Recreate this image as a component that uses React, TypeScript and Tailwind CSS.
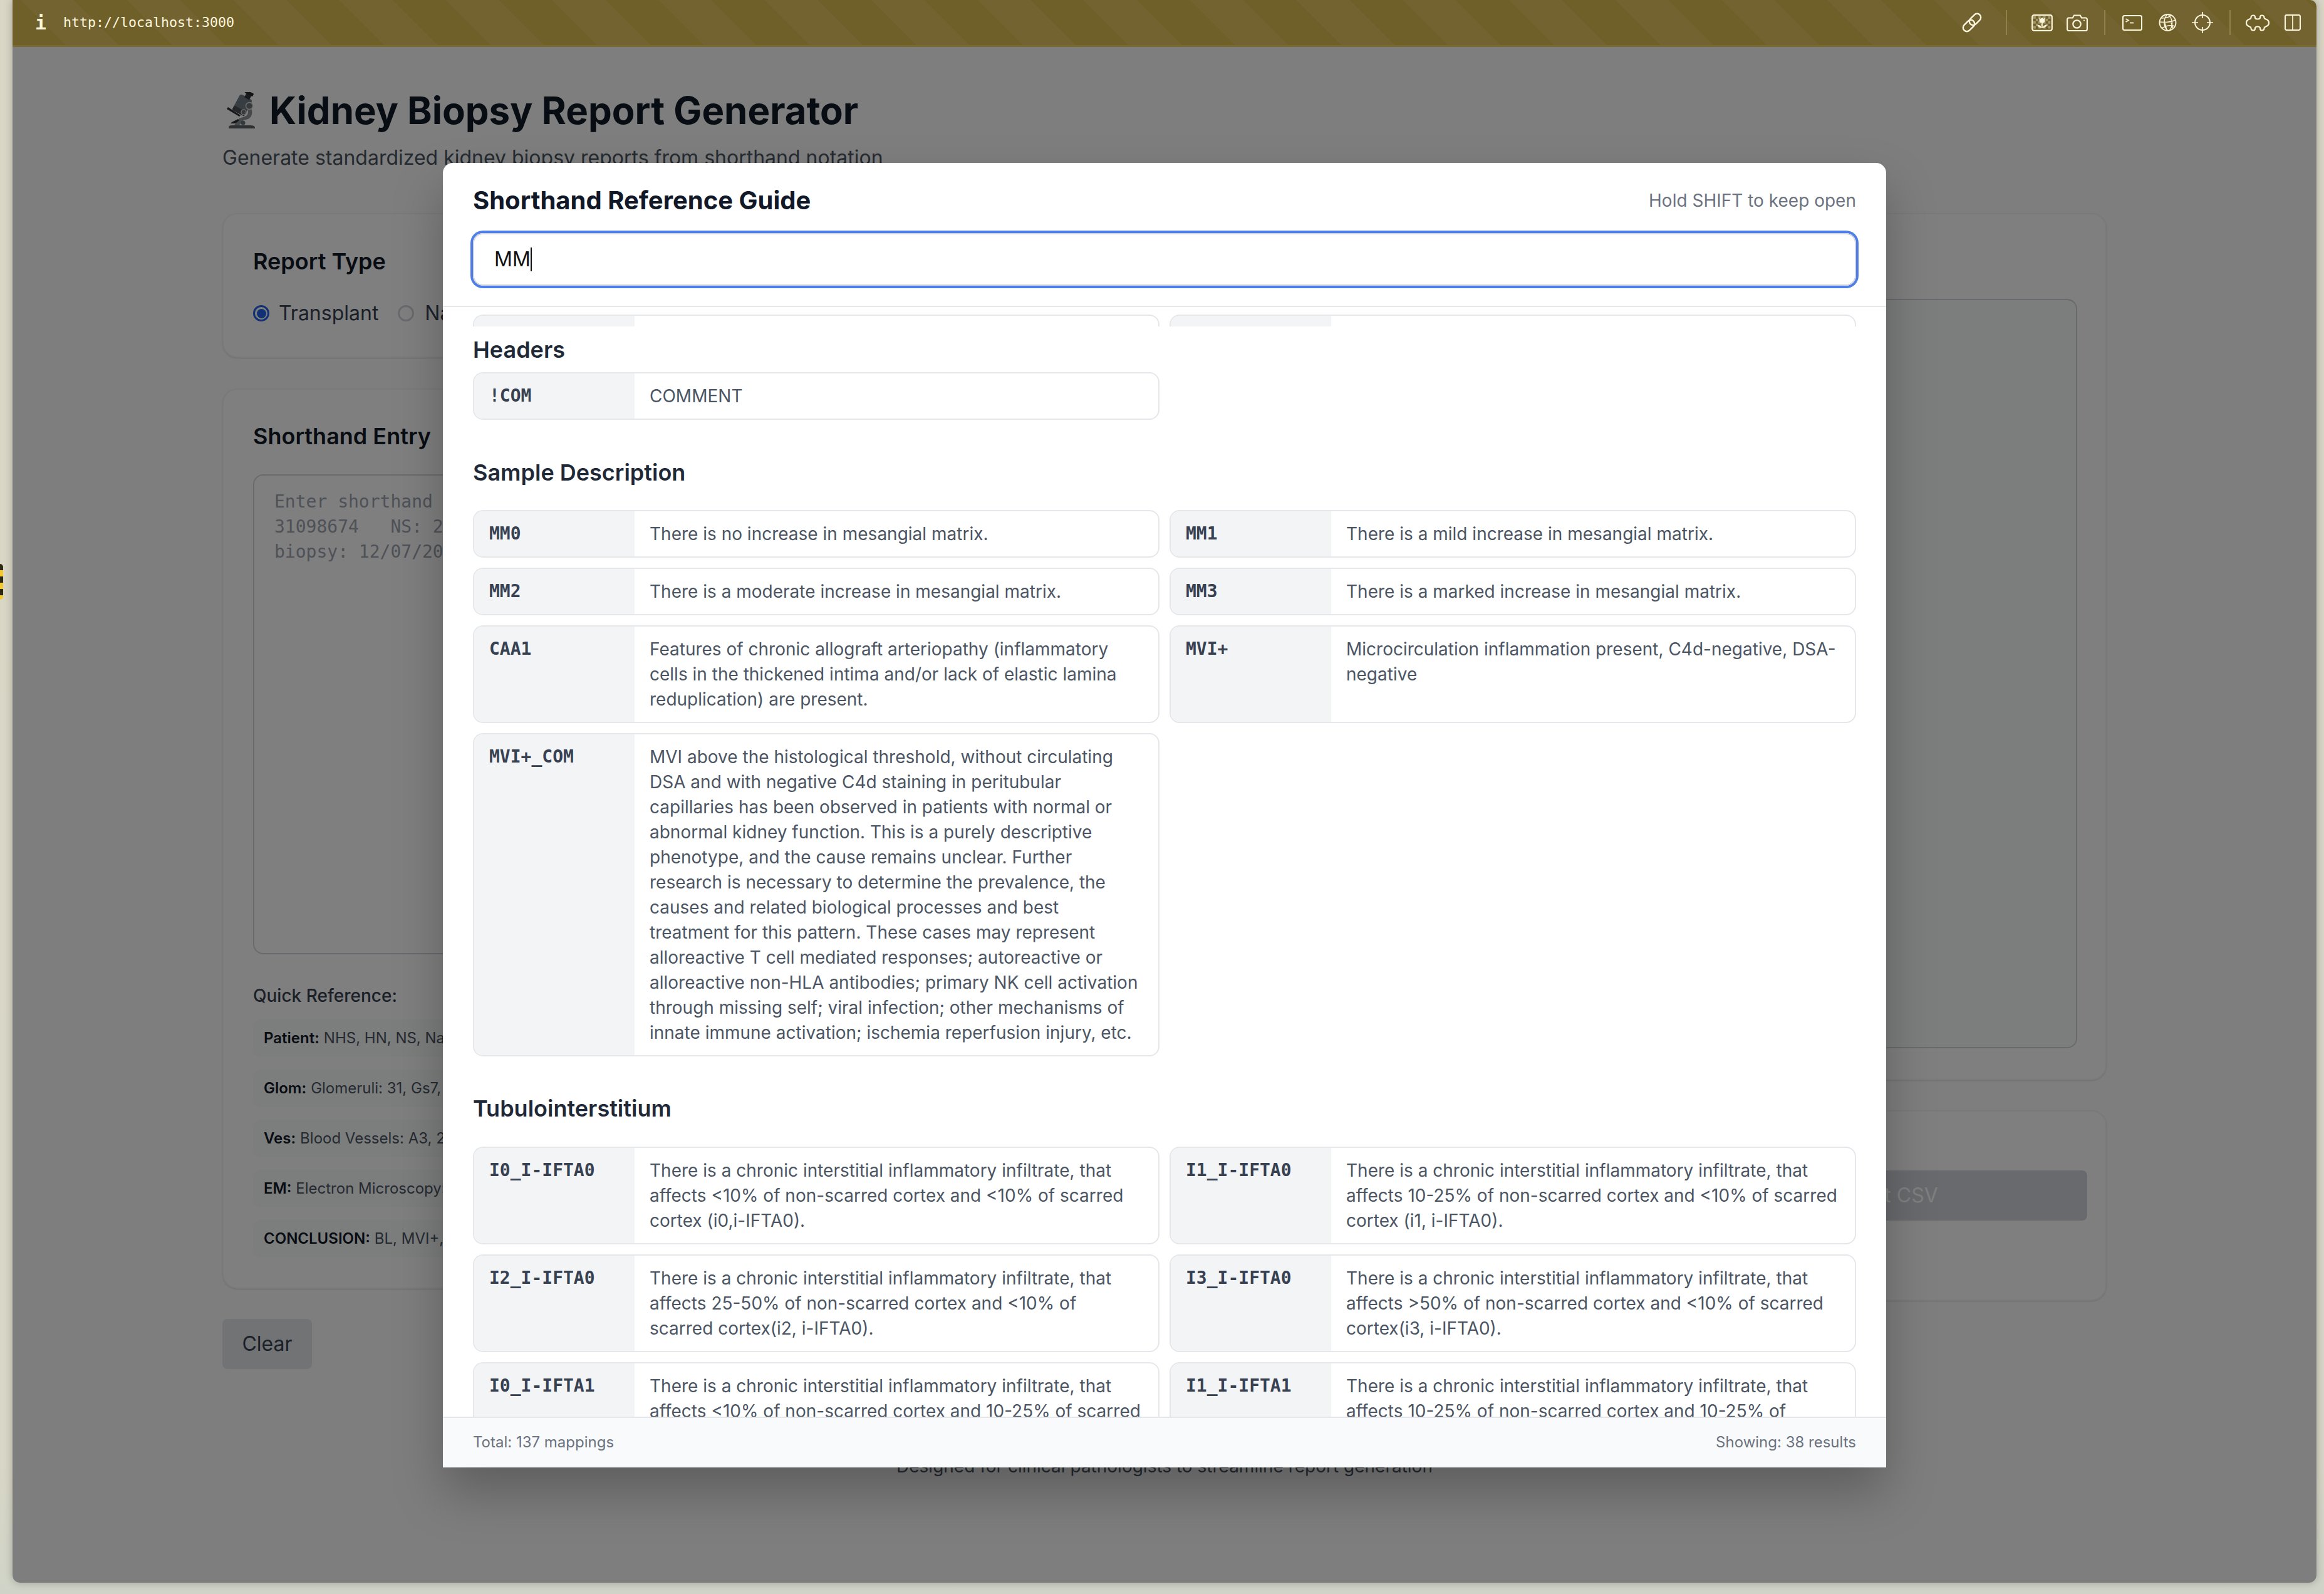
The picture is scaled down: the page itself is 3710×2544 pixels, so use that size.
import React from "react";

const C = "#fdf6dc";

function LinkIcon() {
  return (
    <svg width="34" height="34" viewBox="0 0 34 34" fill="none" stroke={C} strokeWidth="2.4">
      <rect x="1.5" y="16" width="21" height="12" rx="6" transform="rotate(-45 12 22)" />
      <rect x="11.5" y="6" width="21" height="12" rx="6" transform="rotate(-45 22 12)" />
    </svg>
  );
}
function FlowerIcon() {
  const cells: React.ReactNode[] = [];
  for (let r = 0; r < 5; r++)
    for (let c = 0; c < 7; c++)
      if ((r + c) % 2 === 0)
        cells.push(<rect key={r + "-" + c} x={3 + c * 3.9} y={3 + r * 3.9} width="3.9" height="3.9" fill={C} opacity="0.38" />);
  return (
    <svg width="34" height="27" viewBox="0 0 34 27" fill="none">
      {cells}
      <rect x="1.2" y="1.2" width="31.6" height="24.6" rx="3" stroke={C} strokeWidth="2.2" />
      <path d="M12.5 5.5l2.2 1.6L17 4.8l2.3 2.3 2.2-1.6v4.2c0 2.5-2 4-4.5 4s-4.5-1.5-4.5-4z" fill={C} />
      <path d="M17 13v9" stroke={C} strokeWidth="1.6" />
      <path d="M16.4 21.5c-3.6 0-6-1.8-7-4.6 3.4-.3 6 1.4 7 4.6zM17.6 21.5c3.6 0 6-1.8 7-4.6-3.4-.3-6 1.4-7 4.6z" fill={C} />
    </svg>
  );
}
function CameraIcon() {
  return (
    <svg width="34" height="27" viewBox="0 0 34 27" fill="none" stroke={C} strokeWidth="2.2">
      <path d="M3.5 5.5h6.3l2.2-4h9.8l2.2 4h6.5a2.4 2.4 0 0 1 2.4 2.4v15.7a2.4 2.4 0 0 1-2.4 2.4H3.5a2.4 2.4 0 0 1-2.4-2.4V7.9a2.4 2.4 0 0 1 2.4-2.4z" />
      <circle cx="16.5" cy="15.5" r="6.2" />
      <circle cx="28" cy="9.5" r="1.1" fill={C} stroke="none" />
    </svg>
  );
}
function TerminalIcon() {
  return (
    <svg width="32" height="25" viewBox="0 0 32 25" fill="none" stroke={C} strokeWidth="2">
      <rect x="1" y="1" width="30" height="23" rx="2.5" />
      <path d="M5.5 6l4.5 2.5-4.5 2.5" strokeWidth="1.6" />
      <path d="M12 12.5h6" strokeWidth="1.8" />
    </svg>
  );
}
function GlobeIcon() {
  return (
    <svg width="29" height="28" viewBox="0 0 29 28" fill="none" stroke={C} strokeWidth="1.5">
      <circle cx="14.5" cy="14" r="13" strokeWidth="1.9" />
      <path d="M14 1c-3 3-5 8-5 13s2 10 6 13M15 1c4 3 6 8 6.5 13 .3 4-1 9-4.5 13M20 2.8C16 6 9 7 3.5 7M27 10C20 13 10 14 1.5 13M26 20c-6-2-14-1-21 3M10 15l3 11M20 14l3 10" />
    </svg>
  );
}
function CrosshairIcon() {
  return (
    <svg width="34" height="34" viewBox="0 0 34 34" fill="none" stroke={C} strokeWidth="2">
      <circle cx="17" cy="17" r="12" />
      <path d="M17 0v10M17 24v10M0 17h10M24 17h10" strokeWidth="1.7" />
    </svg>
  );
}
function PuzzleIcon() {
  return (
    <svg width="38" height="27" viewBox="0 0 38 27" fill="none" stroke={C} strokeWidth="2.2" strokeLinejoin="round">
      <path d="M8.5 5C8.5 2.5 10.5 1.5 12.5 1.5C14.5 1.5 15 3 15 5C15 6.5 16 7.5 19 7.5C22 7.5 23 6.5 23 5C23 3 23.5 1.5 25.5 1.5C27.5 1.5 29.5 2.5 29.5 5C29.5 6.5 30.5 7 32 7.5C35 8.5 37 11 37 13.5C37 16 35 18.5 32 19.5C30.5 20 29.5 20.5 29.5 22C29.5 24.5 27.5 25.5 25.5 25.5C23.5 25.5 23 24 23 22C23 20.5 22 19.5 19 19.5C16 19.5 15 20.5 15 22C15 24 14.5 25.5 12.5 25.5C10.5 25.5 8.5 24.5 8.5 22C8.5 20.5 7.5 20 6 19.5C3 18.5 1 16 1 13.5C1 11 3 8.5 6 7.5C7.5 7 8.5 6.5 8.5 5Z" />
    </svg>
  );
}
function SplitIcon() {
  return (
    <svg width="26" height="26" viewBox="0 0 26 26" fill="none" stroke={C} strokeWidth="2.1">
      <rect x="1" y="1" width="24" height="24" rx="2.5" />
      <path d="M13 1v24" strokeWidth="1.7" />
    </svg>
  );
}
function Microscope() {
  return (
    <svg width="48" height="58" viewBox="0 0 48 58" className="shrink-0">
      <path d="M3 56c0-2 2-3 5-3h30c4 0 6 1 7 3v2H3z" fill="#5d6468" />
      <path d="M20 53l6-8 8-2c6-3 8-10 5-17-1-3-3-5-5-6l-3 5c4 3 4 10 0 13l-11 4-8 11z" fill="#8b9298" />
      <path d="M2 24l20 13-2 2L0 27z" fill="#2d3136" />
      <path d="M8 48l10-5 2 2-6 5H6z" fill="#2b2f33" />
      <g transform="rotate(28 24 22)">
        <rect x="13" y="6" width="22" height="28" rx="4" fill="#6f7a82" />
        <rect x="13" y="27" width="22" height="8" rx="2" fill="#4d4f50" />
        <rect x="21" y="-1" width="9" height="9" fill="#31353a" />
        <rect x="18" y="-4" width="14" height="5" rx="1" fill="#24272b" />
      </g>
      <circle cx="36" cy="22" r="5.5" fill="#6f7478" stroke="#d9dadb" strokeWidth="1.5" />
      <circle cx="27" cy="32" r="4" fill="#6f7478" stroke="#d9dadb" strokeWidth="1.5" />
      <circle cx="26" cy="49" r="3.5" fill="#6d7276" />
    </svg>
  );
}

function Sep({ cls }: { cls: string }) {
  return <div className={"w-[2px] h-[40px] bg-[#8f8147] " + cls} />;
}
function Tool({ children }: { children: React.ReactNode }) {
  return <div className="w-[56px] flex items-center justify-center">{children}</div>;
}

function Row({ k, v }: { k: string; v: string }) {
  return (
    <div className="flex border-2 border-[#e5e7eb] rounded-[16px] overflow-hidden bg-white">
      <div className="w-[256px] shrink-0 bg-[#f3f4f6] px-[24px] py-[16px] font-['DejaVu_Sans_Mono',monospace] font-bold text-[28px] leading-[40px] text-[#374151]">
        {k}
      </div>
      <div className="flex-1 px-[24px] py-[16px] text-[28px] leading-[40px] text-[#4b5563]">{v}</div>
    </div>
  );
}

function QuickRow({ k, v }: { k: string; v: string }) {
  return (
    <div className="h-[60px] flex items-center px-[17px] rounded-[12px] bg-[#f9fafb] text-[24px] whitespace-nowrap overflow-hidden">
      <span className="font-semibold text-[#111827]">{k}</span>
      <span className="ml-[7px] text-[#4b5563]">{v}</span>
    </div>
  );
}

const Card = ({ className, children }: { className?: string; children: React.ReactNode }) => (
  <div className={"bg-white border-2 border-[#f3f4f6] rounded-[24px] shadow-sm px-[47px] " + (className ?? "")}>{children}</div>
);

export default function App() {
  return (
    <div className="relative w-[3710px] h-[2544px] overflow-hidden bg-[linear-gradient(180deg,#d9d6c6_0%,#d8d6c6_92%,#d0d4c8_100%)] pl-[20px] pr-[12px] pb-[18px] font-['Inter',sans-serif]">
      <div className="absolute left-0 top-[900px] w-[5px] h-[57px] rounded-r-full bg-[repeating-linear-gradient(180deg,#2e2a12_0,#2e2a12_10px,#f5c932_10px,#f5c932_20px)]" />
      <div className="h-full flex flex-col rounded-b-[12px] rounded-tr-[10px] overflow-hidden shadow-[0_0_14px_rgba(0,0,0,0.25)]">
        <div className="h-[75px] shrink-0 flex items-center border-b-[3px] border-[#7a6b34] bg-[repeating-linear-gradient(45deg,#6f5f29_0,#6f5f29_60px,#726330_60px,#726330_120px)]">
          <span className="ml-[36px] font-['DejaVu_Sans_Mono',monospace] font-bold text-[30px] text-[#fdf6dc]">i</span>
          <span className="ml-[27px] font-['DejaVu_Sans_Mono',monospace] text-[21.6px] text-[#fdf6dc]">http://localhost:3000</span>
          <div className="ml-auto pr-[10px] flex items-center">
            <Tool><LinkIcon /></Tool>
            <Sep cls="ml-[26px] mr-[28px]" />
            <Tool><FlowerIcon /></Tool>
            <Tool><CameraIcon /></Tool>
            <Sep cls="mx-[15px]" />
            <Tool><TerminalIcon /></Tool>
            <Tool><GlobeIcon /></Tool>
            <Tool><CrosshairIcon /></Tool>
            <Sep cls="mx-[15px]" />
            <Tool><PuzzleIcon /></Tool>
            <Tool><SplitIcon /></Tool>
          </div>
        </div>

        <div className="relative flex-1 bg-[#fbfdfb] overflow-hidden">
          <div className="w-[3008px] mx-auto pt-[65px]">
            <div className="flex items-center gap-[20px] h-[72px] pl-[7px]">
              <Microscope />
              <h1 className="text-[60px] leading-[72px] font-bold text-[#111827]">Kidney Biopsy Report Generator</h1>
            </div>
            <p className="mt-[16px] text-[32px] leading-[48px] text-[#4b5563]">Generate standardized kidney biopsy reports from shorthand notation</p>
            <div className="mt-[64px] grid grid-cols-2 gap-[32px]">
              <div className="flex flex-col">
                <Card className="h-[231px] pt-[47px]">
                  <h2 className="text-[36px] leading-[56px] font-semibold text-[#111827]">Report Type</h2>
                  <div className="mt-[31px] flex items-center text-[32px] leading-[48px] text-[#374151]">
                    <span className="w-[26px] h-[26px] rounded-full border-[3px] border-[#2563eb] flex items-center justify-center">
                      <span className="w-[15px] h-[15px] rounded-full bg-[#2563eb]" />
                    </span>
                    <span className="ml-[15px]">Transplant</span>
                    <span className="ml-[31px] w-[26px] h-[26px] rounded-full border-[3px] border-[#d1d5db]" />
                    <span className="ml-[17px]">Native</span>
                  </div>
                </Card>
                <Card className="mt-[49px] h-[1437px] pt-[46px]">
                  <h2 className="text-[36px] leading-[56px] font-semibold text-[#111827]">Shorthand Entry</h2>
                  <div className="mt-[33px] h-[766px] border-2 border-[#d1d5db] rounded-[16px] px-[32px] pt-[22px] font-['DejaVu_Sans_Mono',monospace] text-[28px] leading-[40px] text-[#9ca3af] whitespace-pre">
                    {"Enter shorthand notation...\n31098674   NS: 2\nbiopsy: 12/07/2024"}
                  </div>
                  <p className="mt-[46px] text-[28px] leading-[40px] font-medium text-[#374151]">Quick Reference:</p>
                  <div className="mt-[18px] flex flex-col gap-[20px]">
                    <QuickRow k="Patient:" v="NHS, HN, NS, Name" />
                    <QuickRow k="Glom:" v="Glomeruli: 31, Gs7, Segs0" />
                    <QuickRow k="Ves:" v="Blood Vessels: A3, 2" />
                    <QuickRow k="EM:" v="Electron Microscopy: 1" />
                    <QuickRow k="CONCLUSION:" v="BL, MVI+, TCMR" />
                  </div>
                </Card>
                <button className="mt-[48px] w-[143px] h-[80px] rounded-[8px] bg-[#e5e7eb] text-[32px] text-[#374151]">Clear</button>
              </div>
              <div className="flex flex-col">
                <div className="h-[1384px] bg-white border-2 border-[#f3f4f6] rounded-[24px] shadow-sm pt-[135px] px-[45px] pb-[49px]">
                  <div className="h-full border-2 border-[#d1d5db] rounded-[16px] bg-[#f9fafb]" />
                </div>
                <div className="mt-[48px] h-[304px] bg-white border-2 border-[#f3f4f6] rounded-[24px] shadow-sm pr-[29px] pt-[94px] flex justify-end">
                  <div className="w-[650px] h-[80px] rounded-[8px] bg-[#d1d5db] text-white text-[32px] flex items-center justify-center">Export CSV</div>
                </div>
              </div>
            </div>
            <p className="mt-[135px] text-center text-[28px] leading-[40px] text-[#4b5563]">Designed for clinical pathologists to streamline report generation</p>
          </div>

          <div className="absolute inset-0 bg-black/50 flex items-center justify-center">
            <div className="w-[2304px] h-[2082px] bg-white rounded-t-[16px] flex flex-col overflow-hidden shadow-[0_40px_80px_rgba(0,0,0,0.25)]">
              <div className="px-[48px] pt-[32px] pb-[32px] border-b-2 border-[#e5e7eb] shrink-0">
                <div className="flex items-center justify-between h-[56px]">
                  <h2 className="text-[40px] leading-[56px] font-bold text-[#111827]">Shorthand Reference Guide</h2>
                  <span className="text-[28px] text-[#6b7280]">Hold SHIFT to keep open</span>
                </div>
                <div className="mt-[24px] h-[84px] flex items-center border-2 border-[#d1d5db] rounded-[16px] px-[32px] shadow-[0_0_0_4px_#4f7ee8] text-[32px] text-[#111111]">
                  <span>MM</span>
                  <span className="w-[2px] h-[38px] bg-[#111111]" />
                </div>
              </div>

              <div className="flex-1 overflow-hidden px-[48px]">
                <div className="mt-[12px] h-[19px] overflow-hidden grid grid-cols-2 gap-[16px]">
                  <div className="h-[60px] flex border-2 border-[#e5e7eb] rounded-[16px] overflow-hidden"><div className="w-[256px] bg-[#f3f4f6]" /></div>
                  <div className="h-[60px] flex border-2 border-[#e5e7eb] rounded-[16px] overflow-hidden"><div className="w-[256px] bg-[#f3f4f6]" /></div>
                </div>

                <h3 className="mt-[9px] text-[36px] leading-[56px] font-semibold text-[#1f2937]">Headers</h3>
                <div className="mt-[8px] grid grid-cols-2 gap-[16px]">
                  <Row k="!COM" v="COMMENT" />
                </div>

                <h3 className="mt-[56px] text-[36px] leading-[56px] font-semibold text-[#1f2937]">Sample Description</h3>
                <div className="mt-[32px] grid grid-cols-2 gap-[16px]">
                  <Row k="MM0" v="There is no increase in mesangial matrix." />
                  <Row k="MM1" v="There is a mild increase in mesangial matrix." />
                  <Row k="MM2" v="There is a moderate increase in mesangial matrix." />
                  <Row k="MM3" v="There is a marked increase in mesangial matrix." />
                  <Row k="CAA1" v="Features of chronic allograft arteriopathy (inflammatory cells in the thickened intima and/or lack of elastic lamina reduplication) are present." />
                  <Row k="MVI+" v="Microcirculation inflammation present, C4d-negative, DSA-negative" />
                  <Row k="MVI+_COM" v="MVI above the histological threshold, without circulating DSA and with negative C4d staining in peritubular capillaries has been observed in patients with normal or abnormal kidney function. This is a purely descriptive phenotype, and the cause remains unclear. Further research is necessary to determine the prevalence, the causes and related biological processes and best treatment for this pattern. These cases may represent alloreactive T cell mediated responses; autoreactive or alloreactive non-HLA antibodies; primary NK cell activation through missing self; viral infection; other mechanisms of innate immune activation; ischemia reperfusion injury, etc." />
                </div>

                <h3 className="mt-[55px] text-[36px] leading-[56px] font-semibold text-[#1f2937]">Tubulointerstitium</h3>
                <div className="mt-[33px] grid grid-cols-2 gap-[16px]">
                  <Row k="I0_I-IFTA0" v="There is a chronic interstitial inflammatory infiltrate, that affects <10% of non-scarred cortex and <10% of scarred cortex (i0,i-IFTA0)." />
                  <Row k="I1_I-IFTA0" v="There is a chronic interstitial inflammatory infiltrate, that affects 10-25% of non-scarred cortex and <10% of scarred cortex (i1, i-IFTA0)." />
                  <Row k="I2_I-IFTA0" v="There is a chronic interstitial inflammatory infiltrate, that affects 25-50% of non-scarred cortex and <10% of scarred cortex(i2, i-IFTA0)." />
                  <Row k="I3_I-IFTA0" v="There is a chronic interstitial inflammatory infiltrate, that affects >50% of non-scarred cortex and <10% of scarred cortex(i3, i-IFTA0)." />
                  <Row k="I0_I-IFTA1" v="There is a chronic interstitial inflammatory infiltrate, that affects <10% of non-scarred cortex and 10-25% of scarred cortex (i0, i-IFTA1)." />
                  <Row k="I1_I-IFTA1" v="There is a chronic interstitial inflammatory infiltrate, that affects 10-25% of non-scarred cortex and 10-25% of scarred cortex (i1, i-IFTA1)." />
                </div>
              </div>

              <div className="h-[81px] shrink-0 border-t-2 border-[#e5e7eb] bg-[#f9fafb] px-[48px] flex items-center justify-between text-[24px] text-[#6b7280]">
                <span>Total: 137 mappings</span>
                <span>Showing: 38 results</span>
              </div>
            </div>
          </div>
        </div>
      </div>
    </div>
  );
}
